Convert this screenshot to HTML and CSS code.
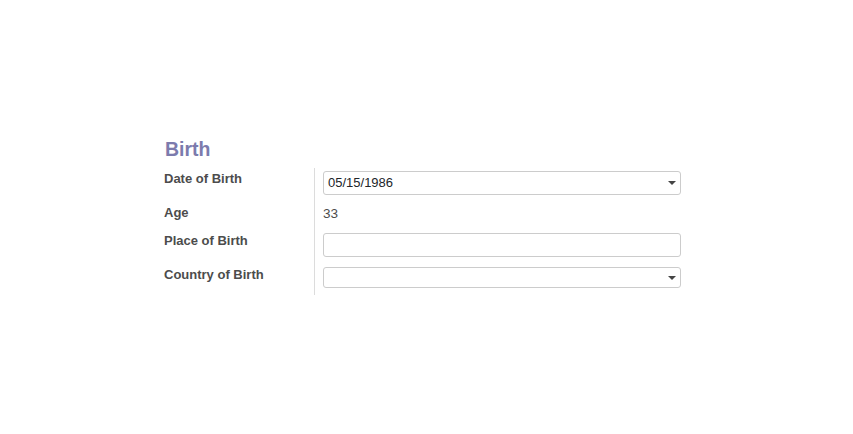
FILE: index.html
```html
<!DOCTYPE html>
<html>
<head>
<meta charset="utf-8">
<link rel="stylesheet" href="styles.css">
</head>
<body>
<div class="sheet">
  <h2 class="title">Birth</h2>
  <div class="form">
    <div class="row r1">
      <div class="label">Date of Birth</div>
      <div class="value">
        <div class="field select"><span class="text">05/15/1986</span><span class="caret"></span></div>
      </div>
    </div>
    <div class="row r2">
      <div class="label">Age</div>
      <div class="value"><span class="plain">33</span></div>
    </div>
    <div class="row r3">
      <div class="label">Place of Birth</div>
      <div class="value"><div class="field"></div></div>
    </div>
    <div class="row r4">
      <div class="label">Country of Birth</div>
      <div class="value"><div class="field select short"><span class="caret"></span></div></div>
    </div>
  </div>
</div>
</body>
</html>
```

FILE: styles.css
```css
html, body {
  margin: 0;
  padding: 0;
  background: #ffffff;
}
body {
  font-family: "Liberation Sans", Arial, sans-serif;
  font-size: 13px;
  color: #4c4c4c;
}
.sheet {
  padding: 136px 0 0 164px;
}
.title {
  margin: 1px 0 0 1px;
  font-size: 19.5px;
  line-height: 25px;
  font-weight: bold;
  color: #7c7bad;
}
.form {
  margin-top: 6px;
}
.row {
  display: flex;
}
.label {
  width: 150px;
  font-weight: bold;
  line-height: 18px;
  color: #4c4c4c;
}
.value {
  border-left: 1px solid #dcdcdc;
  padding-left: 8px;
  width: 358px;
}
.field {
  box-sizing: border-box;
  height: 24px;
  border: 1px solid #cccccc;
  border-radius: 3px;
  position: relative;
  display: flex;
  align-items: center;
  padding-left: 4px;
  color: #212529;
}
.field.short {
  height: 21px;
}
.text {
  line-height: 18px;
}
.caret {
  position: absolute;
  right: 4px;
  top: 50%;
  margin-top: -2px;
  width: 0;
  height: 0;
  border-left: 4px solid transparent;
  border-right: 4px solid transparent;
  border-top: 4px solid #444444;
}
.plain {
  display: block;
  line-height: 18px;
  font-size: 13.5px;
}
.r1 .label { padding-top: 2px; }
.r1 .value { padding-top: 3px; padding-bottom: 6px; }
.r2 .label { padding-top: 3px; }
.r2 .value { padding-top: 4px; padding-bottom: 5px; }
.r3 .label { padding-top: 4px; }
.r3 .value { padding-top: 5px; padding-bottom: 5px; }
.r4 .label { padding-top: 4px; }
.r4 .value { padding-top: 5px; padding-bottom: 7px; }
```
